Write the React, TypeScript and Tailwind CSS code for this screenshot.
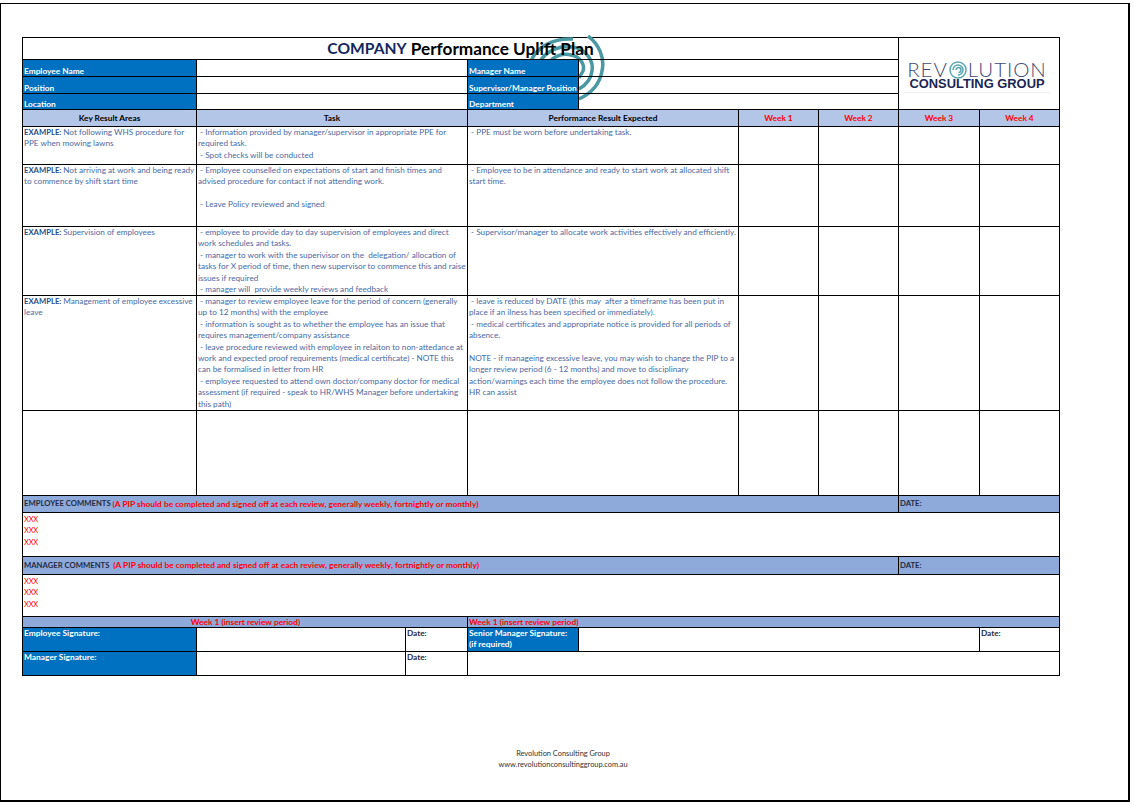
import type { ReactNode } from "react";

const bodyText = "text-[8.2px] leading-[11.4px] text-[#4a6aa5] whitespace-pre";

function Cell({ className = "", children }: { className?: string; children?: ReactNode }) {
  return <div className={`relative border-r border-b border-black min-w-0 ${className}`}>{children}</div>;
}

function Lines({ lines, example }: { lines: string[]; example?: boolean }) {
  return (
    <div className={bodyText}>
      {lines.map((line, i) => (
        <div key={i} className="h-[11.4px]">
          {example && i === 0 ? <span className="font-bold text-[7.7px] text-[#1f4e8c]">EXAMPLE: </span> : null}
          {line}
        </div>
      ))}
    </div>
  );
}

const blueLabel = "bg-[#0070c0] text-white font-bold text-[8.3px] pl-[1px] flex items-end leading-[9px] whitespace-nowrap";
const headCell = "bg-[#b4c6e7] font-bold text-[8.3px] flex items-center justify-center whitespace-nowrap";
const commentCell = "bg-[#8eaadb] font-bold text-[7.7px] flex items-center pl-[1px] whitespace-pre text-[#1f2a44]";
const redNote = "text-[8.4px] text-[#ff0000]";
const signLabel = "bg-[#0070c0] text-white font-bold text-[8.4px] leading-[11.4px] pl-[1px]";
const dateLabel = "font-bold text-[8.2px] leading-[11.4px] pl-[1px] text-[#1f2a44]";
const note = "(A PIP should be completed and signed off at each review, generally weekly, fortnightly or monthly)";

function Row({ a, b, c }: { a?: string[]; b?: string[]; c?: string[] }) {
  return (
    <>
      <Cell className="pl-[1px]">{a && <Lines lines={a} example />}</Cell>
      <Cell className="col-span-2 pl-[1px]">{b && <Lines lines={b} />}</Cell>
      <Cell className="col-span-2 pl-[1px]">{c && <Lines lines={c} />}</Cell>
      <Cell />
      <Cell />
      <Cell />
      <Cell />
    </>
  );
}

function Xxx() {
  return (
    <Cell className="col-span-9 pl-[1px] pt-[1px] text-[7.5px] leading-[11.4px] tracking-[-0.2px] text-[#ff0000]">
      <div>XXX</div>
      <div>XXX</div>
      <div>XXX</div>
    </Cell>
  );
}

export default function App() {
  return (
    <div className="w-[1134px] h-[805px] bg-white pt-[3px] font-['Lato',sans-serif] text-black overflow-hidden">
      <div className="w-[1130px] h-[799px] border-t border-l border-r-2 border-b-2 border-black pl-[21px] pt-[33px] flex flex-col">
        <div className="relative w-[1038px] border-t border-l border-black grid grid-cols-[174px_209px_62px_111px_160px_80px_80px_81px_80px] grid-rows-[22px_17px_17px_16px_17px_38px_62px_69px_115px_85px_17px_44px_18px_42px_11px_24px_24px]">
          {/* swirl behind the title row */}
          <svg className="absolute left-[503px] top-[-3px] w-[104px] h-[70px]" viewBox="525 34 104 70" fill="none" stroke="#4a98a2" strokeWidth="3.5">
            <path d="M587 35 C598 43 604 57 601 70 C599 82 591 92 578 98" />
            <path d="M529 62 C535 46 552 37 572 38" />
            <path d="M538 62 C545 49 560 44 572 46 C585 48 593 60 591 70 C590 78 585 84 578 88" />
            <path d="M548 62 C552 55 562 52 570 54 C580 56 584 64 582 70 L578 77" />
          </svg>

          <Cell className="col-span-7 flex items-center justify-center font-bold leading-none whitespace-pre">
            <span className="text-[15.6px] text-[#12275c]">COMPANY</span>
            <span className="text-[17.2px]"> Performance Uplift Plan</span>
          </Cell>
          <Cell className="col-span-2 row-span-4 bg-white flex flex-col items-center pt-[24px] pr-[4px]">
            <div className="flex items-center h-[15px] text-[20.5px] font-light leading-[15px] text-[#3f4a78]">
              <span className="tracking-[0.9px]">REV</span>
              <svg className="w-[18px] h-[18px] mx-[1px]" viewBox="0 0 18 18" fill="none" stroke="#5aa7b3" strokeWidth="1.5">
                <circle cx="9" cy="9" r="8" />
                <path d="M4 9 A5 5 0 1 1 9 14 M7 9 A2.5 2.5 0 1 1 9.5 11.5" />
              </svg>
              <span className="tracking-[0.9px]">LUTION</span>
            </div>
            <div className="mt-[1px] font-['Liberation_Sans',sans-serif] font-bold text-[12.9px] leading-[12px] text-[#1b2555] whitespace-nowrap">
              CONSULTING GROUP
            </div>
            <div className="mt-[2px] w-[146px] h-px bg-[#eeeeee]" />
          </Cell>

          <Cell className={blueLabel}>Employee Name</Cell>
          <Cell className="col-span-2" />
          <Cell className={blueLabel}>Manager Name</Cell>
          <Cell className="col-span-3" />

          <Cell className={blueLabel}>Position</Cell>
          <Cell className="col-span-2" />
          <Cell className={blueLabel}>Supervisor/Manager Position</Cell>
          <Cell className="col-span-3" />

          <Cell className={blueLabel}>Location</Cell>
          <Cell className="col-span-2" />
          <Cell className={blueLabel}>Department</Cell>
          <Cell className="col-span-3" />

          <Cell className={headCell}>Key Result Areas</Cell>
          <Cell className={`col-span-2 ${headCell}`}>Task</Cell>
          <Cell className={`col-span-2 ${headCell}`}>Performance Result Expected</Cell>
          <Cell className={`${headCell} text-[#ff0000]`}>Week 1</Cell>
          <Cell className={`${headCell} text-[#ff0000]`}>Week 2</Cell>
          <Cell className={`${headCell} text-[#ff0000]`}>Week 3</Cell>
          <Cell className={`${headCell} text-[#ff0000]`}>Week 4</Cell>

          <Row
            a={["Not following WHS procedure for", "PPE when mowing lawns"]}
            b={[" - Information provided by manager/supervisor in appropriate PPE for", "required task.", " - Spot checks will be conducted"]}
            c={[" - PPE must be worn before undertaking task."]}
          />
          <Row
            a={["Not arriving at work and being ready", "to commence by shift start time"]}
            b={[" - Employee counselled on expectations of start and finish times and", "advised procedure for contact if not attending work.", "", " - Leave Policy reviewed and signed"]}
            c={[" - Employee to be in attendance and ready to start work at allocated shift", "start time."]}
          />
          <Row
            a={["Supervision of employees"]}
            b={[
              " - employee to provide day to day supervision of employees and direct",
              "work schedules and tasks.",
              " - manager to work with the superivisor on the  delegation/ allocation of",
              "tasks for X period of time, then new supervisor to commence this and raise",
              "issues if required",
              " - manager will  provide weekly reviews and feedback",
            ]}
            c={[" - Supervisor/manager to allocate work activities effectively and efficiently."]}
          />
          <Row
            a={["Management of employee excessive", "leave"]}
            b={[
              " - manager to review employee leave for the period of concern (generally",
              "up to 12 months) with the employee",
              " - information is sought as to whether the employee has an issue that",
              "requires management/company assistance",
              " - leave procedure reviewed with employee in relaiton to non-attedance at",
              "work and expected proof requirements (medical certificate) - NOTE this",
              "can be formalised in letter from HR",
              " - employee requested to attend own doctor/company doctor for medical",
              "assessment (if required - speak to HR/WHS Manager before undertaking",
              "this path)",
            ]}
            c={[
              " - leave is reduced by DATE (this may  after a timeframe has been put in",
              "place if an ilness has been specified or immediately).",
              " - medical certificates and appropriate notice is provided for all periods of",
              "absence.",
              "",
              "NOTE - if manageing excessive leave, you may wish to change the PIP to a",
              "longer review period (6 - 12 months) and move to disciplinary",
              "action/warnings each time the employee does not follow the procedure.",
              "HR can assist",
            ]}
          />
          <Row />

          <Cell className={`col-span-7 ${commentCell}`}>
            {"EMPLOYEE COMMENTS "}<span className={redNote}>{note}</span>
          </Cell>
          <Cell className={`col-span-2 ${commentCell}`}>DATE:</Cell>
          <Xxx />

          <Cell className={`col-span-7 ${commentCell}`}>
            {"MANAGER COMMENTS  "}<span className={redNote}>{note}</span>
          </Cell>
          <Cell className={`col-span-2 ${commentCell}`}>DATE:</Cell>
          <Xxx />

          <Cell className={`col-span-3 justify-center ${commentCell}`}><span className={redNote}>Week 1 (insert review period)</span></Cell>
          <Cell className={`col-span-6 ${commentCell}`}><span className={redNote}>Week 1 (insert review period)</span></Cell>

          <Cell className={signLabel}>Employee Signature:</Cell>
          <Cell />
          <Cell className={dateLabel}>Date:</Cell>
          <Cell className={`${signLabel} whitespace-nowrap`}>
            <div>Senior Manager Signature:</div>
            <div>(if required)</div>
          </Cell>
          <Cell className="col-span-4" />
          <Cell className={dateLabel}>Date:</Cell>

          <Cell className={signLabel}>Manager Signature:</Cell>
          <Cell />
          <Cell className={dateLabel}>Date:</Cell>
          <Cell className="col-span-6" />
        </div>

        <div className="mt-[72px] w-[1082px] text-center text-[7.4px] leading-[11.4px] text-[#333333]">
          <div>Revolution Consulting Group</div>
          <div>www.revolutionconsultinggroup.com.au</div>
        </div>
      </div>
    </div>
  );
}
